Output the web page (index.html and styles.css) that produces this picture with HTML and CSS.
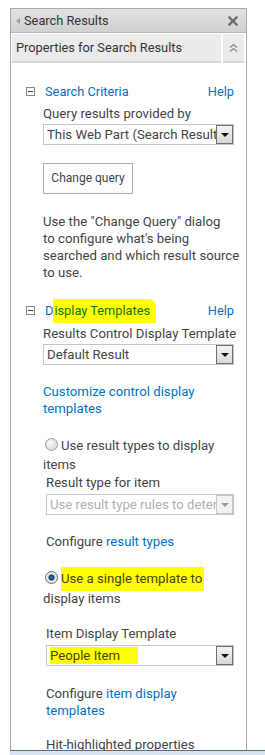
FILE: index.html
```html
<!DOCTYPE html>
<html>
<head>
<meta charset="utf-8">
<link rel="stylesheet" href="styles.css">
</head>
<body>
<div class="page">
  <div class="panel">
    <div class="titlebar">
      <span class="tri"></span>
      <span class="title">Search Results</span>
      <svg class="close" width="10" height="10" viewBox="0 0 10 10"><path d="M1.5 1.5 L8.5 8.5 M8.5 1.5 L1.5 8.5" stroke="#6d6d6d" stroke-width="2.4" stroke-linecap="square"/></svg>
    </div>
    <div class="propsrow">
      <div class="propsbar">Properties for Search Results</div>
      <div class="chev"><svg width="9" height="10" viewBox="0 0 9 10"><path d="M1 4.5 L4.5 1.5 L8 4.5 M1 8.5 L4.5 5.5 L8 8.5" fill="none" stroke="#8a8a8a" stroke-width="1.3"/></svg></div>
    </div>
    <div class="content">
      <div class="sechead s1"><span class="minus"></span><span class="sectitle">Search Criteria</span><span class="help">Help</span></div>
      <div class="label l1">Query results provided by</div>
      <div class="select"><span class="seltext">This Web Part (Search Results)</span><span class="dd"><span class="arrow"></span></span></div>
      <div class="btnwrap"><span class="btn">Change query</span></div>
      <p class="desc">Use the "Change Query" dialog<br>to configure what's being<br>searched and which result source<br>to use.</p>
      <div class="sechead s2"><span class="minus"></span><span class="sectitle">D<span class="hl hl-title">isplay Templates</span></span><span class="help">Help</span></div>
      <div class="label l2">Results Control Display Template</div>
      <div class="select"><span class="seltext">Default Result</span><span class="dd"><span class="arrow"></span></span></div>
      <p class="link l3">Customize control display<br>templates</p>
      <div class="radiorow r1"><span class="radio"></span>Use result types to display<br>items</div>
      <div class="indent">
        <div class="label l4">Result type for item</div>
        <div class="select disabled"><span class="seltext">Use result type rules to determine</span><span class="dd"><span class="arrow"></span></span></div>
        <p class="cfg c1">Configure <span class="blue">result types</span></p>
      </div>
      <div class="radiorow r2"><span class="radio checked"></span><span class="hl hl-radio">Use a single template to</span><br>display items</div>
      <div class="indent">
        <div class="label l5">Item Display Template</div>
        <div class="select"><span class="seltext"><span class="hl hl-sel">People Item</span></span><span class="dd"><span class="arrow"></span></span></div>
        <p class="cfg c2">Configure <span class="blue">item display<br>templates</span></p>
        <div class="label l6">Hit-highlighted properties</div>
      </div>
    </div>
  </div>
  <div class="bottombar"></div>
</div>
</body>
</html>
```
FILE: styles.css
```css
html, body {
  margin: 0;
  padding: 0;
  background: #fff;
}
body {
  font-family: Roboto, "Open Sans", sans-serif;
  font-size: 13.2px;
  color: #444;
  width: 265px;
  height: 755px;
  overflow: hidden;
}
.page {
  padding-top: 8px;
  padding-left: 10px;
}
.panel {
  width: 235px;
  height: 741px;
  border: 1px solid #a8a8a8;
  border-bottom: none;
  overflow: hidden;
  background: #fff;
}
.titlebar {
  height: 23px;
  background: linear-gradient(#e2e2e2, #d0d0d0);
  border-bottom: 1px solid #b8b8b8;
  display: flex;
  align-items: center;
  padding-left: 5px;
  padding-right: 8px;
}
.tri {
  width: 0;
  height: 0;
  border-top: 3.5px solid transparent;
  border-bottom: 3.5px solid transparent;
  border-right: 4px solid #9a9a9a;
  margin-right: 4px;
}
.title {
  flex: 1;
  font-size: 12.8px;
  color: #333;
}
.close {
  display: block;
}
.propsrow {
  display: flex;
  gap: 2px;
  margin: 1px 2px 0 1px;
  height: 29px;
}
.propsbar {
  flex: 1;
  background: #ebebeb;
  border-bottom: 2px solid #d6d6d6;
  font-size: 12.8px;
  color: #333;
  display: flex;
  align-items: center;
  padding-left: 4px;
}
.chev {
  width: 21px;
  background: #ebebeb;
  border-bottom: 2px solid #d6d6d6;
  display: flex;
  align-items: center;
  justify-content: center;
}
.chev svg { display: block; }
.content {
  padding: 0 12px 0 15px;
  line-height: 17px;
}
.sechead {
  display: flex;
  align-items: center;
  height: 17px;
}
.s1 { margin-top: 20px; }
.s2 { margin-top: 21px; }
.minus {
  width: 7px;
  height: 7px;
  border: 1px solid #8a8a8a;
  position: relative;
  margin-right: 10px;
  flex: none;
}
.minus::after {
  content: "";
  position: absolute;
  left: 1px;
  right: 1px;
  top: 3px;
  height: 1px;
  background: #444;
}
.sectitle {
  flex: 1;
  color: #0072c6;
  font-size: 12.8px;
}
.help {
  color: #0072c6;
  font-size: 12.8px;
}
.label {
  margin-left: 17px;
  white-space: nowrap;
}
.indent .label { margin-left: 20px; }
.l1 { margin-top: 5px; }
.l2 { margin-top: 6px; }
.l4 { margin-top: 0; }
.l5 { margin-top: 16px; }
.l6 { margin-top: 17px; }
.select {
  margin-left: 17px;
  margin-top: 2px;
  height: 19px;
  border: 1px solid #c6c6c6;
  display: flex;
  align-items: center;
  background: #fff;
}
.indent .select { margin-left: 20px; margin-top: 3px; }
.seltext {
  flex: 1;
  white-space: nowrap;
  overflow: hidden;
  padding-left: 3px;
  color: #444;
}
.dd {
  width: 15px;
  height: 17px;
  border: 1px solid #6f6f6f;
  background: linear-gradient(#f4f4f4, #d8d8d8);
  display: flex;
  align-items: center;
  justify-content: center;
  flex: none;
}
.arrow {
  width: 0;
  height: 0;
  border-left: 4px solid transparent;
  border-right: 4px solid transparent;
  border-top: 4px solid #111;
}
.disabled .seltext { color: #b0b0b0; }
.disabled .dd {
  border-color: #c8c8c8;
  background: #f2f2f2;
}
.disabled .arrow { border-top-color: #9a9a9a; }
.btnwrap {
  margin-left: 17px;
  margin-top: 18px;
  height: 31px;
}
.btn {
  display: inline-flex;
  align-items: center;
  justify-content: center;
  width: 88px;
  height: 29px;
  border: 1px solid #ababab;
  background: #fdfdfd;
  font-size: 12px;
  color: #444;
}
p { margin: 0; }
.desc {
  margin-left: 17px;
  margin-top: 19px;
  white-space: nowrap;
}
.link {
  margin-left: 17px;
  color: #0072c6;
  white-space: nowrap;
}
.l3 { margin-top: 18px; }
.radiorow {
  margin-left: 17px;
  line-height: 19px;
  white-space: nowrap;
}
.r1 { margin-top: 19px; }
.r2 { margin-top: 19px; line-height: 20px; }
.radio {
  display: inline-block;
  border-radius: 50%;
  border: 1px solid #9c9c9c;
  background: radial-gradient(circle at 40% 35%, #fafafa, #d0d0d0);
  vertical-align: -1px;
  margin-left: 2px;
  margin-right: 3px;
  box-sizing: border-box;
  width: 13px;
  height: 13px;
}
.radio.checked {
  border-color: #6a6a6a;
  background: radial-gradient(circle, #2a7fc0 0, #0d3d66 2.5px, #ddd 3.5px, #f0f0f0 6px);
}
.cfg { margin-left: 20px; white-space: nowrap; }
.c1 { margin-top: 18px; }
.c2 { margin-top: 19px; }
.blue { color: #0072c6; }
.hl {
  background: #ffff00;
}
.hl-title {
  color: #0a7a0a;
  padding: 4px 6px 5px 1px;
  border-radius: 2px 8px 2px 2px;
}
.hl-radio {
  color: #44440a;
  padding: 4px 2px 5px 0;
}
.hl-sel {
  color: #44440a;
  padding: 2px 18px 3px 0;
}
.bottombar {
  height: 5px;
  border-top: 1px solid #5e6b7c;
  background: #d8e3f0;
}
```
